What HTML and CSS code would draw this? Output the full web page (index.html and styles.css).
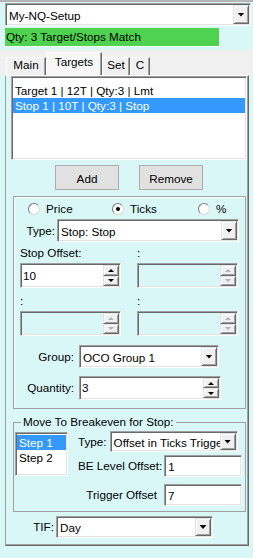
FILE: index.html
```html
<!doctype html>
<html>
  <head>
    <title>My-NQ-Setup</title>
    <meta http-equiv="Content-Type" content="text/html; charset=utf-8" />
    <link rel="stylesheet" href="styles.css">
  </head>
  <body>
    <div class="combo sunken setup">
      <span class="combo-text">My-NQ-Setup</span>
      <span class="drop raised"></span>
    </div>
    <div class="status">Qty: 3 Target/Stops Match</div>

    <div class="tabstrip">
      <div class="tab tab-main">Main</div>
      <div class="tab tab-targets active">Targets</div>
      <div class="tab tab-set">Set</div>
      <div class="tab tab-c">C</div>
    </div>

    <div class="page">
      <div class="listbox sunken orders">
        <div class="item">Target 1 | 12T | Qty:3 | Lmt</div>
        <div class="item selected">Stop 1 | 10T | Qty:3 | Stop</div>
      </div>

      <div class="buttons">
        <div class="button">Add</div>
        <div class="button">Remove</div>
      </div>

      <div class="group">
        <div class="radios">
          <div class="radio"><span class="radio-dot"></span>Price</div>
          <div class="radio"><span class="radio-dot checked"></span>Ticks</div>
          <div class="radio"><span class="radio-dot"></span>%</div>
        </div>

        <div class="row type-row">
          <span class="lbl">Type:</span>
          <div class="combo sunken type-combo">
            <span class="combo-text">Stop: Stop</span>
            <span class="drop raised"></span>
          </div>
        </div>

        <div class="offsets">
          <div class="field">
            <span class="field-lbl">Stop Offset:</span>
            <div class="spin sunken">
              <span class="spin-text">10</span>
              <span class="spin-btns">
                <span class="spin-btn raised up"></span>
                <span class="spin-btn raised down"></span>
              </span>
            </div>
          </div>
          <div class="field">
            <span class="field-lbl">:</span>
            <div class="spin sunken disabled">
              <span class="spin-text"></span>
              <span class="spin-btns">
                <span class="spin-btn raised up"></span>
                <span class="spin-btn raised down"></span>
              </span>
            </div>
          </div>
          <div class="field">
            <span class="field-lbl">:</span>
            <div class="spin sunken disabled">
              <span class="spin-text"></span>
              <span class="spin-btns">
                <span class="spin-btn raised up"></span>
                <span class="spin-btn raised down"></span>
              </span>
            </div>
          </div>
          <div class="field">
            <span class="field-lbl">:</span>
            <div class="spin sunken disabled">
              <span class="spin-text"></span>
              <span class="spin-btns">
                <span class="spin-btn raised up"></span>
                <span class="spin-btn raised down"></span>
              </span>
            </div>
          </div>
        </div>

        <div class="row group-row">
          <span class="lbl">Group:</span>
          <div class="combo sunken group-combo">
            <span class="combo-text">OCO Group 1</span>
            <span class="drop raised"></span>
          </div>
        </div>

        <div class="row qty-row">
          <span class="lbl">Quantity:</span>
          <div class="spin sunken qty-spin">
            <span class="spin-text">3</span>
            <span class="spin-btns">
              <span class="spin-btn raised up"></span>
              <span class="spin-btn raised down"></span>
            </span>
          </div>
        </div>
      </div>

      <fieldset class="be-group">
        <legend>Move To Breakeven for Stop:</legend>
        <div class="be-body">
          <div class="listbox sunken steps">
            <div class="item selected">Step 1</div>
            <div class="item">Step 2</div>
          </div>
          <div class="be-fields">
            <div class="row be-type">
              <span class="lbl">Type:</span>
              <div class="combo sunken be-combo">
                <span class="combo-text">Offset in Ticks Trigger</span>
                <span class="drop raised"></span>
              </div>
            </div>
            <div class="row be-level">
              <span class="lbl">BE Level Offset:</span>
              <div class="textbox sunken">1</div>
            </div>
            <div class="row be-trigger">
              <span class="lbl">Trigger Offset</span>
              <div class="textbox sunken">7</div>
            </div>
          </div>
        </div>
      </fieldset>

      <div class="row tif-row">
        <span class="lbl">TIF:</span>
        <div class="combo sunken tif-combo">
          <span class="combo-text">Day</span>
          <span class="drop raised"></span>
        </div>
      </div>
    </div>
  </body>
</html>
```

FILE: styles.css
```css
* {
  margin: 0px;
  padding: 0px;
  box-sizing: border-box;
}
body {
  width: 253px;
  height: 558px;
  overflow: hidden;
  background-color: #daf7f7;
  border-top: 2px solid #b4b4b4;
  font-family: "Liberation Sans", Arial, sans-serif;
  font-size: 11.7px;
  line-height: 14px;
  color: #000;
}

/* classic 3d edges */
.sunken {
  border: 1px solid;
  border-color: #a0a0a0 #ffffff #ffffff #a0a0a0;
  box-shadow: inset 1px 1px 0 #696969, inset -1px -1px 0 #e3e3e3;
}
.raised {
  background-color: #f0f0f0;
  border: 1px solid;
  border-color: #e3e3e3 #696969 #696969 #e3e3e3;
  box-shadow: inset 1px 1px 0 #ffffff, inset -1px -1px 0 #a0a0a0;
}

/* combo boxes */
.combo {
  display: flex;
  height: 23px;
  padding: 1px;
  background-color: #fff;
}
.combo-text {
  flex: 1;
  align-self: center;
  padding: 2px 0 0 2px;
  white-space: nowrap;
  overflow: hidden;
}
.drop {
  width: 16px;
  flex: none;
  display: flex;
  align-items: center;
  justify-content: center;
}
.drop::after {
  content: "";
  width: 7px;
  height: 4px;
  background-color: #000;
  clip-path: polygon(0 0, 100% 0, 50% 100%);
}
.setup {
  margin: 1px 0 0 5px;
  width: 246px;
}

.status {
  margin: 2px 0 0 5px;
  width: 214px;
  height: 18px;
  line-height: 18px;
  padding-left: 1px;
  background-color: #4fd24f;
  box-shadow: 1px 1px 0 #ffffff;
}

/* tabs */
.tabstrip {
  display: flex;
  align-items: flex-end;
  height: 25px;
  margin-top: 4px;
  padding-left: 6px;
  background-color: #f0f0f0;
}
.tab {
  height: 18px;
  border-top: 1px solid #fff;
  border-left: 1px solid #fff;
  border-right: 1px solid #696969;
  box-shadow: inset -1px 0 0 #a0a0a0;
  text-align: center;
}
.tab.active {
  height: 23px;
  padding-top: 2px;
  background-color: #f7f7f7;
}
.tab-main {
  width: 40px;
}
.tab-targets {
  width: 56px;
}
.tab-set {
  width: 28px;
}
.tab-c {
  width: 20px;
}

.page {
  margin-left: 5px;
  width: 244px;
  border: 1px solid;
  border-color: #ffffff #696969 #696969 #a0a0a0;
  box-shadow: inset -1px -1px 0 #a0a0a0;
  padding-bottom: 7px;
}

/* list boxes */
.listbox {
  background-color: #fff;
  padding: 1px;
}
.item {
  line-height: 15px;
  padding-left: 2px;
  white-space: nowrap;
}
.item.selected {
  background-color: #3399ff;
  color: #fff;
}
.orders {
  margin-left: 5px;
  width: 236px;
  height: 84px;
  padding-top: 6px;
}
.steps {
  flex: none;
  width: 53px;
  height: 44px;
  margin: 3px 0 0 1px;
  padding-top: 2px;
}

.buttons {
  display: flex;
  gap: 20px;
  margin: 5px 0 0 49px;
}
.button {
  width: 64px;
  height: 25px;
  padding-top: 3px;
  line-height: 20px;
  text-align: center;
  background-color: #e1e1e1;
  border: 1px solid #adadad;
}

/* stop settings */
.group {
  margin: 6px 0 0 7px;
  width: 233px;
  border: 1px solid #a0a0a0;
  box-shadow: inset 1px 1px 0 #ffffff;
  padding-bottom: 8px;
}
.radios {
  display: grid;
  grid-template-columns: 84px 86px auto;
  margin: 5px 0 0 14px;
}
.radio {
  display: flex;
  align-items: center;
  gap: 6px;
}
.radio-dot {
  width: 12px;
  height: 12px;
  border-radius: 50%;
  border: 1px solid;
  border-color: #7a7a7a #d8d8d8 #d8d8d8 #7a7a7a;
  background-color: #fff;
  display: flex;
  align-items: center;
  justify-content: center;
}
.radio-dot.checked::after {
  content: "";
  width: 4px;
  height: 4px;
  border-radius: 50%;
  background-color: #000;
}

.row {
  display: flex;
  align-items: center;
}
.lbl {
  flex: none;
  text-align: right;
  white-space: nowrap;
}
.type-row {
  margin-top: 3px;
  height: 23px;
}
.type-row .lbl {
  width: 41px;
}
.type-combo {
  margin-left: 2px;
  width: 182px;
}

.offsets {
  display: grid;
  grid-template-columns: 101px 101px;
  column-gap: 16px;
  row-gap: 6px;
  margin: 4px 0 0 6px;
}
.field {
  display: flex;
  flex-direction: column;
  gap: 3px;
}

/* spinners */
.spin {
  display: flex;
  height: 25px;
  padding: 1px;
  background-color: #fff;
}
.spin.disabled {
  background-color: transparent;
}
.spin-text {
  flex: 1;
  align-self: center;
  padding-left: 1px;
}
.spin-btns {
  width: 16px;
  flex: none;
  display: flex;
  flex-direction: column;
}
.spin-btn {
  flex: 1;
  display: flex;
  align-items: center;
  justify-content: center;
}
.spin-btn::after {
  content: "";
  border-left: 3px solid transparent;
  border-right: 3px solid transparent;
}
.spin-btn.up::after {
  border-bottom: 3px solid #000;
}
.spin-btn.down::after {
  border-top: 3px solid #000;
}
.disabled .spin-btn.up::after {
  border-bottom-color: #b4b4b4;
}
.disabled .spin-btn.down::after {
  border-top-color: #b4b4b4;
}

.group-row {
  margin-top: 9px;
  height: 23px;
}
.group-row .lbl,
.qty-row .lbl {
  width: 60px;
}
.group-combo {
  margin-left: 5px;
  width: 140px;
}
.qty-row {
  margin-top: 8px;
  height: 24px;
}
.qty-spin {
  margin-left: 5px;
  width: 142px;
  height: 24px;
}

/* breakeven */
.be-group {
  margin: 6px 0 0 7px;
  width: 233px;
  min-width: 0;
  border: 1px solid #a0a0a0;
  padding: 0 0 5px 0;
}
.be-group legend {
  margin-left: 7px;
  padding: 0 2px;
  line-height: 14px;
}
.be-body {
  display: flex;
}
.be-fields {
  flex: none;
  width: 164px;
  margin-left: 10px;
}
.be-type {
  margin-top: 2px;
  height: 21px;
}
.be-combo {
  margin-left: 3px;
  width: 128px;
  height: 21px;
}
.be-level {
  margin-top: 3px;
  justify-content: flex-end;
  gap: 2px;
}
.be-trigger {
  margin-top: 7px;
  justify-content: flex-end;
  gap: 7px;
}
.textbox {
  width: 78px;
  height: 22px;
  padding: 1px 0 0 3px;
  display: flex;
  align-items: center;
  background-color: #fff;
}

.tif-row {
  margin-top: 4px;
  height: 22px;
}
.tif-row .lbl {
  width: 48px;
}
.tif-combo {
  margin-left: 2px;
  width: 157px;
  height: 22px;
}
```
